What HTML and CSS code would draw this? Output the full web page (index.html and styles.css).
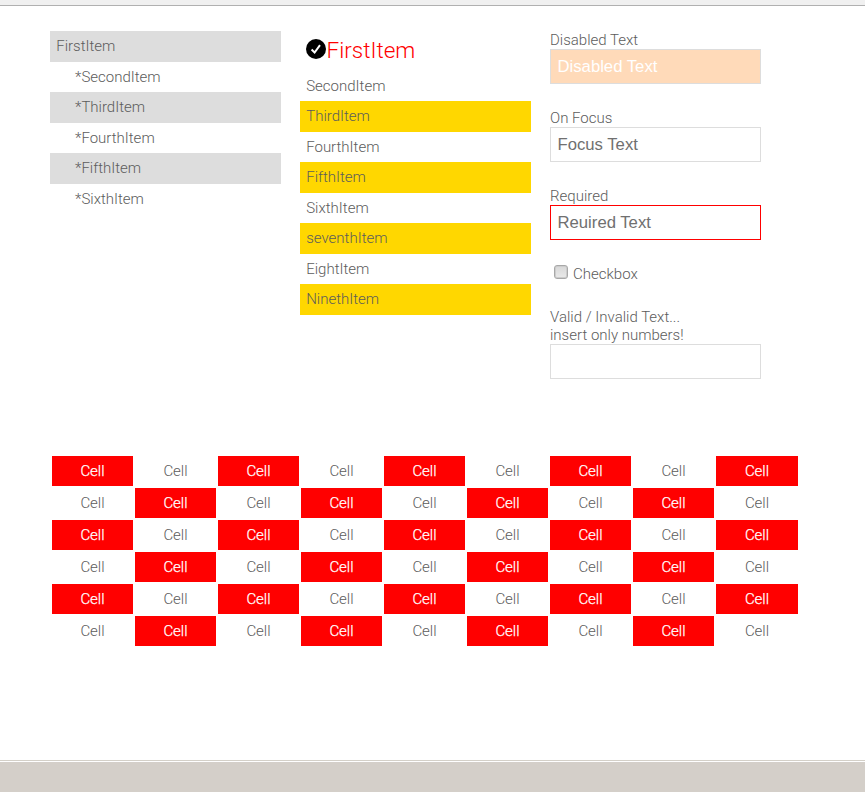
FILE: index.html
```
<!DOCTYPE html>
<html lang="en">
<head>
<meta charset="utf-8">
<title>Selectors</title>
<link rel="stylesheet" href="styles.css">
</head>
<body>
<div class="topbar"></div>
<main>
  <div class="columns">
    <ul class="list gray">
      <li>FirstItem</li>
      <li>SecondItem</li>
      <li>ThirdItem</li>
      <li>FourthItem</li>
      <li>FifthItem</li>
      <li>SixthItem</li>
    </ul>
    <ul class="list gold">
      <li><svg class="check" viewBox="0 0 20 20"><circle cx="10" cy="10" r="10"/><path d="M5.6 10.5l3 3L14 6.2"/></svg>FirstItem</li>
      <li>SecondItem</li>
      <li>ThirdItem</li>
      <li>FourthItem</li>
      <li>FifthItem</li>
      <li>SixthItem</li>
      <li>seventhItem</li>
      <li>EightItem</li>
      <li>NinethItem</li>
    </ul>
    <form>
      <label>Disabled Text<input type="text" class="field" placeholder="Disabled Text" disabled></label>
      <label>On Focus<input type="text" class="field" placeholder="Focus Text"></label>
      <label>Required<input type="text" class="field required" placeholder="Reuired Text"></label>
      <label class="checkline"><input type="checkbox" class="box">Checkbox</label>
      <label>Valid / Invalid Text...<br>insert only numbers!<input type="text" class="field"></label>
    </form>
  </div>
  <div class="cells">
    <span>Cell</span><span>Cell</span><span>Cell</span><span>Cell</span><span>Cell</span><span>Cell</span><span>Cell</span><span>Cell</span><span>Cell</span>
    <span>Cell</span><span>Cell</span><span>Cell</span><span>Cell</span><span>Cell</span><span>Cell</span><span>Cell</span><span>Cell</span><span>Cell</span>
    <span>Cell</span><span>Cell</span><span>Cell</span><span>Cell</span><span>Cell</span><span>Cell</span><span>Cell</span><span>Cell</span><span>Cell</span>
    <span>Cell</span><span>Cell</span><span>Cell</span><span>Cell</span><span>Cell</span><span>Cell</span><span>Cell</span><span>Cell</span><span>Cell</span>
    <span>Cell</span><span>Cell</span><span>Cell</span><span>Cell</span><span>Cell</span><span>Cell</span><span>Cell</span><span>Cell</span><span>Cell</span>
    <span>Cell</span><span>Cell</span><span>Cell</span><span>Cell</span><span>Cell</span><span>Cell</span><span>Cell</span><span>Cell</span><span>Cell</span>
  </div>
</main>
<div class="bottombar"></div>
</body>
</html>
```
FILE: styles.css
```
* { box-sizing: border-box; }
body {
  margin: 0;
  height: 792px;
  display: flex;
  flex-direction: column;
  overflow: hidden;
  background: #fff;
  color: #5c5c5c;
  font: 300 15px/18px Roboto, sans-serif;
}
.topbar {
  height: 6px;
  background: #f0f0f0;
  border-bottom: 1px solid #b0b0b0;
}
main {
  flex: 1;
  padding: 25px 50px 0;
}
.columns {
  display: grid;
  grid-template-columns: 231px 231px 211px;
  column-gap: 19px;
  height: 425px;
}
.list {
  margin: 0;
  padding: 0;
  list-style: none;
}
.list li {
  height: 30.5px;
  padding: 6px 6.2px;
}
.gray li:nth-child(odd) { background: #ddd; }
.gray li + li { padding-left: 25px; }
.gray li + li::before { content: "*"; }
.gold li:nth-child(odd) { background: gold; }
.gold li:first-child {
  display: flex;
  align-items: center;
  height: 39.5px;
  padding: 0 6px 2px;
  background: none;
  color: red;
  font-size: 22.5px;
}
.check {
  width: 20px;
  height: 20px;
  margin: -1px 0.5px 0 0;
}
.check path {
  fill: none;
  stroke: #fff;
  stroke-width: 2;
}
form {
  display: flex;
  flex-direction: column;
  gap: 25px;
}
label { display: block; }
.field {
  display: block;
  width: 211px;
  height: 35px;
  padding: 0 6.5px;
  border: 1px solid #ddd;
  background: #fff;
  font: 16.7px "Liberation Sans", Arial, sans-serif;
}
.field::placeholder { color: #707070; }
.field:disabled { background: peachpuff; }
.field:disabled::placeholder { color: #fff; }
.field.required { border-color: red; }
.checkline {
  display: flex;
  height: 18px;
}
.box {
  appearance: none;
  width: 14px;
  height: 14px;
  margin: 0 5.5px 0 3.5px;
  border: 1px solid #a8a8a8;
  border-radius: 3px;
  background: linear-gradient(#d8d8d8, #eaeaea);
  box-shadow: inset 0 0 0 1px #ccc;
}
.cells {
  display: grid;
  grid-template-columns: repeat(8, 81px) 82px;
  grid-auto-rows: 30px;
  gap: 2px;
  margin-left: 2px;
}
.cells span {
  padding-top: 6px;
  text-align: center;
}
.cells span:nth-child(odd) {
  background: red;
  color: #fff;
  -webkit-text-stroke: 0.25px #fff;
}
.bottombar {
  height: 32px;
  border-top: 1px solid #d4d0c8;
  background: #d4cfc9;
  box-shadow: inset 0 1px #fff;
}
```
